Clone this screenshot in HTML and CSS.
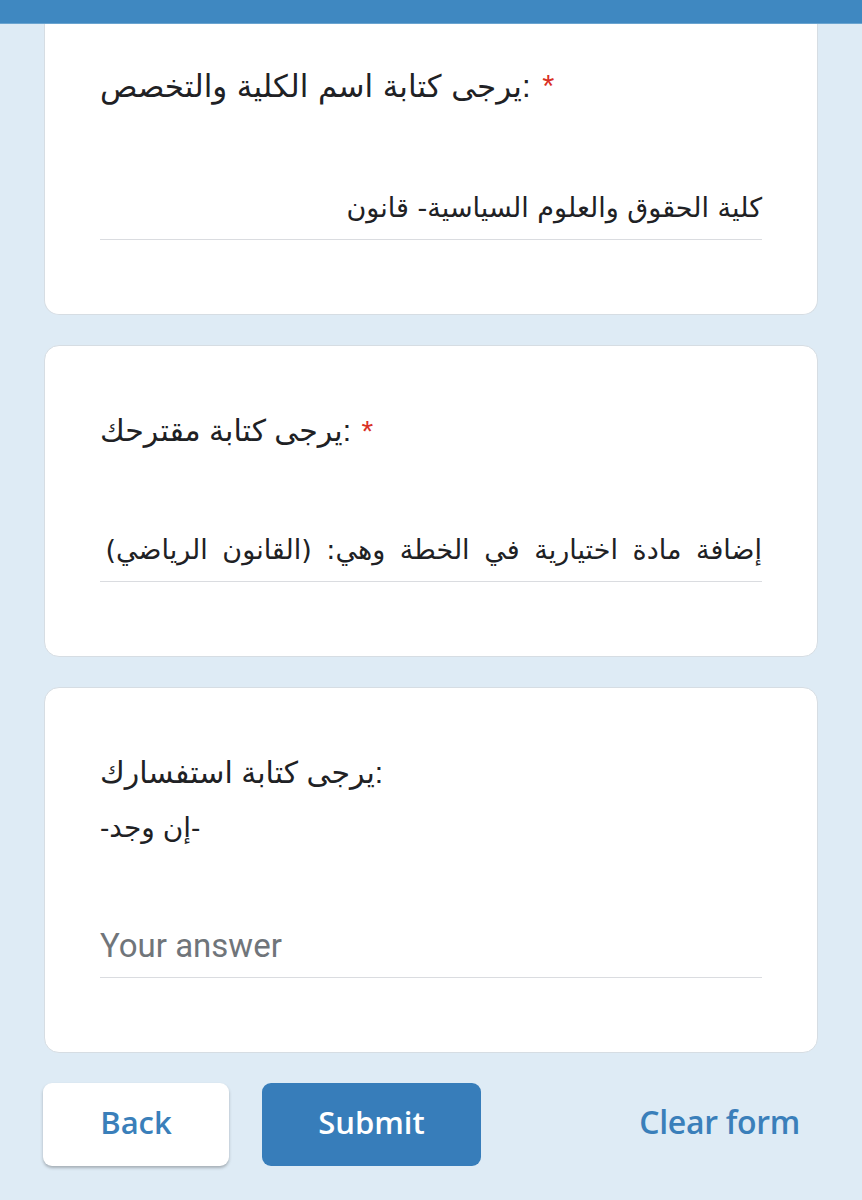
FILE: index.html
```html
<!DOCTYPE html>
<html lang="ar">
<head>
<meta charset="utf-8">
<title>Form</title>
<link rel="stylesheet" href="styles.css">
</head>
<body>
<div class="topbar"></div>
<main class="page">
  <section class="card card-first">
    <div class="q-title q-title-wide">يرجى كتابة اسم الكلية والتخصص: <span class="req">*</span></div>
    <div class="answer"><span class="answer-text" dir="rtl">كلية الحقوق والعلوم السياسية- قانون</span></div>
  </section>
  <section class="card">
    <div class="q-title">يرجى كتابة مقترحك: <span class="req">*</span></div>
    <div class="answer"><span class="answer-text answer-spaced" dir="rtl">إضافة مادة اختيارية في الخطة وهي: (القانون الرياضي)</span></div>
  </section>
  <section class="card">
    <div class="q-title">يرجى كتابة استفسارك:</div>
    <div class="q-desc">-إن وجد-</div>
    <div class="answer answer-empty"><span class="placeholder">Your answer</span></div>
  </section>
  <div class="actions">
    <button class="btn btn-back">Back</button>
    <button class="btn btn-submit">Submit</button>
    <button class="btn btn-clear">Clear form</button>
  </div>
</main>
</body>
</html>
```
FILE: styles.css
```css
html, body {
  margin: 0;
  padding: 0;
}
body {
  background: #deebf5;
  font-family: "DejaVu Sans", "Noto Sans", sans-serif;
  color: #202124;
  width: 862px;
  height: 1200px;
  overflow: hidden;
}
.topbar {
  height: 23px;
  background: #3f88c1;
  border-bottom: 1px solid #6aa4d0;
}
.page {
  padding: 0 44px;
  display: flex;
  flex-direction: column;
  gap: 30px;
}
.card {
  background: #fff;
  border: 1px solid #d6dde3;
  border-radius: 15px;
  padding: 64px 55px 74px 55px;
  display: flex;
  flex-direction: column;
}
.card-first {
  border-top: none;
  border-top-left-radius: 0;
  border-top-right-radius: 0;
  padding-top: 42px;
}
.q-title {
  font-family: "Liberation Sans", "DejaVu Sans", sans-serif;
  font-size: 30px;
  line-height: 42px;
  height: 42px;
  direction: ltr;
  text-align: left;
  white-space: nowrap;
}
.q-title-wide {
  font-size: 31px;
  word-spacing: 1px;
}
.req {
  color: #d93025;
  font-family: "Liberation Sans", sans-serif;
  margin-left: 2px;
}
.q-desc {
  font-family: "Liberation Sans", "DejaVu Sans", sans-serif;
  font-size: 28px;
  line-height: 40px;
  margin-top: 14px;
}
.answer {
  margin-top: 80px;
  border-bottom: 1px solid #dadce0;
  padding-bottom: 11px;
  text-align: right;
  line-height: 40px;
  height: 40px;
  white-space: nowrap;
}
.card + .card .answer { margin-top: 78px; }
.answer-text {
  font-family: "DejaVu Sans", sans-serif;
  font-size: 27px;
  color: #202124;
}
.answer-spaced {
  word-spacing: 6px;
}
.answer-empty {
  text-align: left;
}
.placeholder {
  font-family: Roboto, sans-serif;
  font-size: 33px;
  color: #70757a;
}
.actions {
  display: flex;
  align-items: center;
}
.btn {
  font-family: "Open Sans", Lato, sans-serif;
  font-weight: 600;
  font-size: 31px;
  border: none;
  height: 83px;
  border-radius: 9px;
  cursor: pointer;
  padding: 0 0 6px 0;
}
.btn-back {
  width: 186px;
  background: #fff;
  color: #3a7fba;
  margin-left: -1px;
  box-shadow: 0 2px 3px rgba(60, 64, 67, 0.35);
}
.btn-submit {
  width: 219px;
  margin-left: 33px;
  background: #377dba;
  color: #fff;
}
.btn-clear {
  margin-left: auto;
  margin-right: 18px;
  background: transparent;
  color: #3a7fba;
  font-size: 32px;
  letter-spacing: -0.3px;
}
```
